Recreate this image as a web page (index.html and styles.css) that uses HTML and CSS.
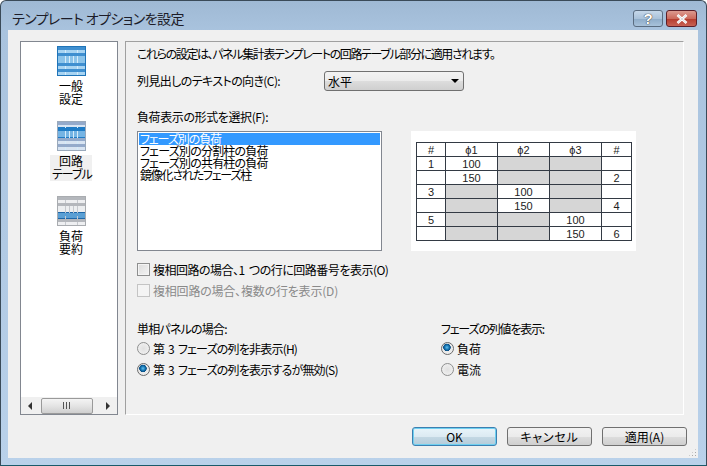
FILE: index.html
```html
<!DOCTYPE html>
<html lang="ja">
<head>
  <meta charset="UTF-8" />
  <title>テンプレート オプションを設定</title>
  <link rel="stylesheet" href="styles.css">
</head>
<body>

<svg class="defs" width="0" height="0">
  <defs>
    <g id="ticks" stroke="currentColor" stroke-width="1">
      <path d="M8.5 4V7M20.5 4V7M8.5 20V23M20.5 20V23M8.5 26V29M20.5 26V29"/>
      <path d="M8.5 10V17M12.5 10V17M16.5 10V17M20.5 10V17"/>
    </g>
  </defs>
</svg>

<div class="window">
  <div class="titlebar">
    <span class="title">テンプレート オプションを設定</span>
    <div class="caption">
      <div class="cap-btn help">?</div>
      <div class="cap-btn close">
        <svg width="14" height="10" viewBox="0 0 14 10"><path d="M2.5 1L11.5 9M11.5 1L2.5 9" stroke="#fff" stroke-width="2.6"/><path d="M3 1.5L11 8.5M11 1.5L3 8.5" stroke="#d8d8dc" stroke-width="1"/></svg>
      </div>
    </div>
  </div>

  <div class="client">
    <div class="main">
      <div class="nav">
        <div class="nav-items">
          <div class="nav-item">
            <svg class="nav-icon ticks-light" width="29" height="30" viewBox="0 0 29 30">
              <rect x="0.5" y="0.5" width="28" height="29" fill="#3f8fd0" stroke="#1f74b8"/>
              <rect x="1" y="4" width="27" height="3" fill="#a8d4f2"/>
              <rect x="1" y="10" width="27" height="7" fill="#8cc4ea"/>
              <rect x="1" y="20" width="27" height="3" fill="#a8d4f2"/>
              <rect x="1" y="26" width="27" height="3" fill="#a8d4f2"/>
              <use href="#ticks"/>
            </svg>
            <div class="nav-label">一般<br>設定</div>
          </div>
          <div class="nav-item active">
            <svg class="nav-icon ticks-light" width="29" height="30" viewBox="0 0 29 30">
              <rect x="0.5" y="0.5" width="28" height="29" fill="#94aacb" stroke="#9aa9bb"/>
              <rect x="1" y="4" width="27" height="2" fill="#d8e4f2"/>
              <rect x="1" y="6" width="27" height="4" fill="#1f7cc6"/>
              <rect x="1" y="10" width="27" height="6" fill="#75b4e4"/>
              <rect x="1" y="16" width="27" height="1" fill="#1f7cc6"/>
              <rect x="1" y="20" width="27" height="3" fill="#d8e4f2"/>
              <rect x="1" y="26" width="27" height="3" fill="#d8e4f2"/>
              <use href="#ticks"/>
            </svg>
            <div class="nav-label">回路<br><span class="ls-10">テーブル</span></div>
          </div>
          <div class="nav-item">
            <svg class="nav-icon ticks-gray" width="29" height="30" viewBox="0 0 29 30">
              <rect x="0.5" y="0.5" width="28" height="29" fill="#b4b7bc" stroke="#a9acb0"/>
              <rect x="1" y="4" width="27" height="3" fill="#eeeff1"/>
              <rect x="1" y="10" width="27" height="6" fill="#eceef0"/>
              <rect x="1" y="16" width="27" height="7" fill="#1f67a8"/>
              <rect x="1" y="17" width="27" height="5" fill="#5a9fd4"/>
              <rect x="1" y="26" width="27" height="3" fill="#eeeff1"/>
              <use href="#ticks"/>
            </svg>
            <div class="nav-label">負荷<br>要約</div>
          </div>
        </div>
        <div class="hscroll">
          <span class="arrow-left"></span>
          <div class="thumb"><span class="grip"></span></div>
          <span class="arrow-right"></span>
        </div>
      </div>

      <div class="panel">
        <div class="intro">これらの設定は、パネル集計表テンプレートの回路テーブル部分に適用されます。</div>

        <div class="combo-row">
          <span class="combo-label"><span class="ls-6">列見出しのテキストの向き(C):</span></span>
          <div class="combo"><span>水平</span><span class="combo-arrow"></span></div>
        </div>

        <div class="list-label ls-4">負荷表示の形式を選択(F):</div>

        <div class="list-row">
          <div class="listbox">
            <div class="option selected ls-11">フェーズ別の負荷</div>
            <div class="option ls-8">フェーズ別の分割柱の負荷</div>
            <div class="option ls-8">フェーズ別の共有柱の負荷</div>
            <div class="option ls-12">鏡像化されたフェーズ柱</div>
          </div>
          <div class="preview">
            <table>
              <tr><th>#</th><th>ϕ1</th><th>ϕ2</th><th>ϕ3</th><th>#</th></tr>
              <tr><td>1</td><td>100</td><td class="off"></td><td class="off"></td><td></td></tr>
              <tr><td></td><td>150</td><td class="off"></td><td class="off"></td><td>2</td></tr>
              <tr><td>3</td><td class="off"></td><td>100</td><td class="off"></td><td></td></tr>
              <tr><td></td><td class="off"></td><td>150</td><td class="off"></td><td>4</td></tr>
              <tr><td>5</td><td class="off"></td><td class="off"></td><td>100</td><td></td></tr>
              <tr><td></td><td class="off"></td><td class="off"></td><td>150</td><td>6</td></tr>
            </table>
          </div>
        </div>

        <div class="check"><span class="box"></span><span class="spaced ls-5">複相回路の場合、1 つの行に回路番号を表示(O)</span></div>
        <div class="check disabled"><span class="box"></span><span class="ls-2">複相回路の場合、複数の行を表示(D)</span></div>

        <div class="groups">
          <div class="group group-left">
            <div class="group-label ls-8">単相パネルの場合:</div>
            <div class="radio"><span class="dot"></span><span class="spaced ls-8">第 3 フェーズの列を非表示(H)</span></div>
            <div class="radio"><span class="dot on"></span><span class="spaced ls-8">第 3 フェーズの列を表示するが無効(S)</span></div>
          </div>
          <div class="group">
            <div class="group-label ls-12">フェーズの列値を表示:</div>
            <div class="radio"><span class="dot on"></span>負荷</div>
            <div class="radio"><span class="dot"></span>電流</div>
          </div>
        </div>
      </div>
    </div>

    <div class="buttons">
      <button class="btn default">OK</button>
      <button class="btn wide">キャンセル</button>
      <button class="btn">適用(A)</button>
    </div>
    <div class="grip-corner"></div>
  </div>
</div>

</body>
</html>
```
FILE: styles.css
```css
html, body {
  margin: 0;
  padding: 0;
}

body {
  width: 707px;
  height: 466px;
  overflow: hidden;
  font-family: "Noto Sans CJK JP", "Liberation Sans", sans-serif;
  font-size: 12px;
  font-feature-settings: "palt";
  color: #000;
}

/* kana in the original font are narrower, so text is tightened per line */
.ls-2 { letter-spacing: -0.2px; }
.ls-4 { letter-spacing: -0.4px; }
.ls-5 { letter-spacing: -0.5px; }
.ls-6 { letter-spacing: -0.6px; }
.ls-8 { letter-spacing: -0.8px; }
.ls-10 { letter-spacing: -1px; }
.ls-11 { letter-spacing: -1.1px; }
.ls-12 { letter-spacing: -1.2px; }

.spaced {
  word-spacing: 2px;
}

.defs {
  position: absolute;
}

.window {
  box-sizing: border-box;
  width: 707px;
  height: 466px;
  display: flex;
  flex-direction: column;
  padding: 0 8px 7px 7px;
  background: linear-gradient(to bottom, #9fb9d4 0, #a9c3de 30px, #b9d1ea 100%);
  border: 1px solid #3a4a58;
  border-bottom-color: #1a5a6a;
  border-radius: 6px 6px 0 0;
}

.titlebar {
  height: 29px;
  flex: none;
  display: flex;
  justify-content: space-between;
  padding-left: 4px;
  margin-right: 1px;
}

.title {
  font-size: 14px;
  line-height: 20px;
  margin-top: 7px;
  letter-spacing: -0.55px;
  color: #1c1c28;
}

.caption {
  display: flex;
  gap: 3px;
  margin-top: 9px;
}

.cap-btn {
  box-sizing: border-box;
  height: 17px;
  width: 31px;
  border: 1px solid #5a6c80;
  border-radius: 3px;
  display: flex;
  align-items: center;
  justify-content: center;
  color: #fff;
}

.help {
  width: 30px;
  background: linear-gradient(to bottom, #c6d8ea 0, #aac2da 50%, #8dabc8 51%, #a8c2da 100%);
  font-family: "Liberation Sans", sans-serif;
  font-weight: bold;
  font-size: 15px;
  line-height: 15px;
  text-shadow: 0 0 1px #333, 0 0 1px #333;
}

.close {
  background: linear-gradient(to bottom, #dc9a90 0, #cc6a5c 50%, #b43a2c 51%, #c86254 100%);
  border-color: #5c1e28;
}

.client {
  flex: 1;
  position: relative;
  background: #f0f0f0;
  display: flex;
  flex-direction: column;
  padding: 11px 14px 0 12px;
  min-height: 0;
}

.main {
  height: 374px;
  display: flex;
  gap: 7px;
}

.nav {
  box-sizing: border-box;
  width: 98px;
  flex: none;
  background: #fff;
  border: 1px solid #828790;
  display: flex;
  flex-direction: column;
}

.nav-items {
  flex: 1;
  display: flex;
  flex-direction: column;
  align-items: center;
  padding: 4px 0 0 4px;
}

.nav-item {
  height: 75px;
  display: flex;
  flex-direction: column;
  align-items: center;
}

.nav-icon {
  display: block;
  flex: none;
}

.ticks-light {
  color: #d4ebfa;
}

.ticks-gray {
  color: #c6c9ce;
}

.nav-label {
  margin-top: 4px;
  padding: 0 2px;
  width: 38px;
  text-align: center;
  line-height: 12.5px;
  height: 26px;
  white-space: nowrap;
}

.active .nav-label {
  background: #f0f0f0;
}

.hscroll {
  height: 17px;
  flex: none;
  display: flex;
  align-items: center;
  background: #f0f0f0;
  padding: 0 7px;
}

.arrow-left {
  width: 0;
  height: 0;
  border: 4px solid transparent;
  border-left: 0;
  border-right-color: #333;
}

.arrow-right {
  width: 0;
  height: 0;
  margin-left: 13px;
  border: 4px solid transparent;
  border-right: 0;
  border-left-color: #333;
}

.thumb {
  box-sizing: border-box;
  width: 52px;
  height: 16px;
  margin-left: 9px;
  border: 1px solid #9a9a9a;
  border-radius: 2px;
  background: linear-gradient(to bottom, #f4f4f4 0, #e4e4e4 50%, #cfcfcf 100%);
  display: flex;
  align-items: center;
  justify-content: center;
}

.grip {
  width: 9px;
  height: 7px;
  background: repeating-linear-gradient(to right, #555 0, #555 1px, transparent 1px, transparent 3px);
}

.panel {
  box-sizing: border-box;
  flex: 1;
  border: 1px solid #fff;
  border-left-color: #a0a0a0;
  border-top-color: #a0a0a0;
  padding: 4px 0 0 11px;
}

.intro {
  line-height: 16px;
  letter-spacing: -1.38px;
  white-space: nowrap;
}

.combo-row {
  display: flex;
  align-items: center;
  height: 20px;
  margin-top: 9px;
}

.combo-label {
  width: 187px;
  margin-bottom: 2px;
}

.combo {
  box-sizing: border-box;
  width: 140px;
  height: 20px;
  border: 1px solid #707070;
  border-radius: 3px;
  background: linear-gradient(to bottom, #f2f2f2 0, #ebebeb 50%, #dddddd 51%, #cfcfcf 100%);
  display: flex;
  align-items: center;
  justify-content: space-between;
  padding: 0 4px 0 3px;
}

.combo-arrow {
  width: 0;
  height: 0;
  border: 4px solid transparent;
  border-bottom: 0;
  border-top: 4px solid #000;
}

.list-label {
  margin-top: 18px;
  line-height: 16px;
}

.list-row {
  display: flex;
  gap: 29px;
  margin-top: 6px;
}

.listbox {
  box-sizing: border-box;
  width: 245px;
  height: 120px;
  background: #fff;
  border: 1px solid #828790;
  padding: 1px;
}

.option {
  height: 12px;
  line-height: 12px;
  padding-left: 1px;
  white-space: nowrap;
}

.option.selected {
  background: #3399ff;
  color: #fff;
}

.preview {
  box-sizing: border-box;
  width: 225px;
  height: 120px;
  background: #fff;
  padding: 11px 0 0 5px;
}

table {
  border-collapse: collapse;
  table-layout: fixed;
  width: 215px;
  font-family: "Liberation Sans", sans-serif;
  font-size: 11px;
  color: #222;
}

th, td {
  box-sizing: border-box;
  height: 14px;
  padding: 0;
  border: 1px solid #333a44;
  text-align: center;
  line-height: 12px;
  font-weight: normal;
  width: 52px;
}

th:first-child, td:first-child {
  width: 29px;
}

th:last-child, td:last-child {
  width: 30px;
}

td.off {
  background: #d6d6d6;
}

.check {
  display: flex;
  align-items: center;
  gap: 3px;
  height: 16px;
  margin-top: 10px;
  white-space: nowrap;
}

.check + .check {
  margin-top: 5px;
}

.box {
  box-sizing: border-box;
  width: 13px;
  height: 13px;
  border: 1px solid #8e8f8f;
  background: linear-gradient(135deg, #dcdcdc, #f4f4f4);
  box-shadow: inset 0 0 0 1px #f4f4f4;
}

.disabled {
  color: #8a8a8a;
}

.disabled .box {
  border-color: #c4c4c4;
  background: #f4f4f4;
  box-shadow: none;
}

.groups {
  display: flex;
  margin-top: 23px;
}

.group-left {
  width: 304px;
}

.group-label {
  line-height: 16px;
  margin-bottom: 3px;
}

.radio {
  display: flex;
  align-items: center;
  gap: 3px;
  height: 16px;
  margin-top: 5px;
  white-space: nowrap;
}

.group-label + .radio {
  margin-top: 3px;
}

.dot {
  box-sizing: border-box;
  width: 13px;
  height: 13px;
  border-radius: 50%;
  border: 1px solid #8e8f8f;
  background: radial-gradient(circle, #e0e0e0 0, #f4f4f4 100%);
  flex: none;
}

.dot.on {
  background: radial-gradient(circle at 45% 40%, #5fc0f0 0, #0f6ba8 2.5px, #0a4e84 3.5px, #e8e8e8 4px, #f4f4f4 100%);
  border-color: #6a6a6a;
}

.buttons {
  display: flex;
  justify-content: flex-end;
  gap: 10px;
  margin-top: 12px;
  margin-right: -3px;
}

.btn {
  box-sizing: border-box;
  width: 85px;
  height: 19px;
  padding: 0;
  font-family: inherit;
  font-size: 12px;
  font-feature-settings: "palt";
  line-height: 15px;
  border: 1px solid #707070;
  border-radius: 3px;
  background: linear-gradient(to bottom, #f2f2f2 0, #ebebeb 50%, #dddddd 51%, #cfcfcf 100%);
  color: #000;
}

.btn.wide {
  letter-spacing: 0.8px;
}

.btn.default {
  border-color: #3c7fb1;
  box-shadow: inset 0 0 0 1px #6fd0f0;
  background: linear-gradient(to bottom, #e8f4fa 0, #dceaf2 50%, #c4d8e4 51%, #b4ccda 100%);
}

.grip-corner {
  position: absolute;
  right: 1px;
  bottom: 1px;
  width: 9px;
  height: 9px;
  background: radial-gradient(circle, #a8a8a8 0, #a8a8a8 1px, transparent 1px) 0 0 / 3px 3px;
  clip-path: polygon(100% 0, 100% 100%, 0 100%);
}
```
